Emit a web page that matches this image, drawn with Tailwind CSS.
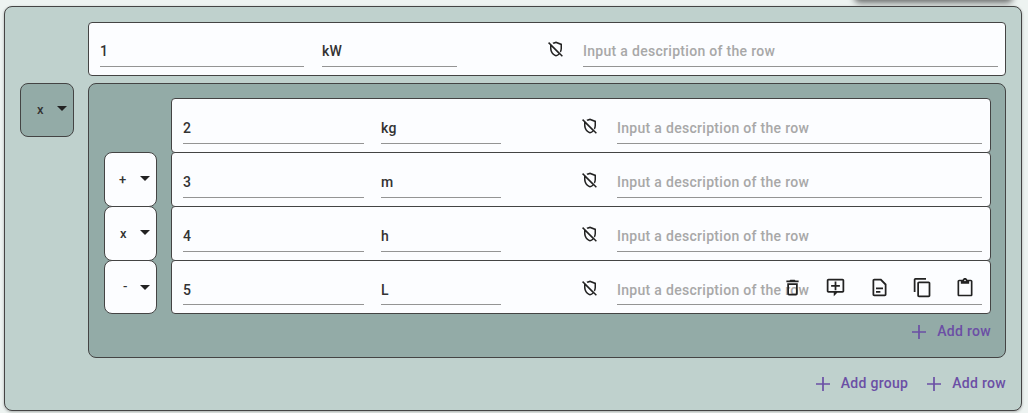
<!doctype html>
<html>
<head>
<meta charset="utf-8">
<script src="https://cdn.jsdelivr.net/npm/@tailwindcss/browser@4"></script>
</head>
<body class="relative h-[413px] w-[1028px] overflow-hidden bg-[#edf3f1] font-['Roboto',sans-serif] text-[14px] font-medium tracking-[0.3px] text-[#333]">
<div class="absolute right-[17px] top-[-8px] h-[8px] w-[155px] rounded bg-[#333] shadow-[0_1px_6px_2px_rgba(0,0,0,0.55)]"></div>

<main class="absolute left-[4px] top-[6px] flex h-[405px] w-[1018px] flex-col rounded-[8px] border border-[#444] bg-[#bfd1cd] pl-[15px] pr-[15px] pt-[15px] shadow-[0_1px_3px_rgba(0,0,0,0.3)]">
  <div class="flex">
    <div class="w-[68px] shrink-0"></div>
    <div class="flex h-[54px] w-[919px] items-start rounded-[4px] border border-[#444] bg-[#fcfdff] pl-[11px] pr-[7px]">
      <div class="w-[204px] shrink-0 border-b border-[#949494] pb-[5px] pt-[19px] leading-[19px]">1</div>
      <div class="ml-[18px] w-[135px] shrink-0 border-b border-[#949494] pb-[5px] pt-[19px] leading-[19px]">kW</div>
      <svg class="ml-[90px] mt-[17px] shrink-0" width="18" height="18" viewBox="0 0 24 24" fill="#222"><path d="M12 4.360l6 2.250v4.700c0 1.340-.36 2.660-.95 3.900l1.500 1.500c.9-1.650 1.450-3.520 1.450-5.400V5l-8-3-4.720 1.770 1.550 1.550L12 4.360zM2.810 2.810 1.390 4.220 4 6.830v4.260c0 5.050 3.410 9.760 8 10.910 1.790-.45 3.420-1.410 4.760-2.710l3.020 3.020 1.410-1.410L2.810 2.810zM12 19.930c-3.450-1.130-6-4.790-6-8.840v-2.250l9.340 9.340c-.96.820-2.100 1.430-3.340 1.750z"/></svg>
      <div class="ml-[18px] flex-1 border-b border-[#949494] pb-[5px] pt-[19px] leading-[19px] text-[#a8a8a8]">Input a description of the row</div>
    </div>
  </div>

  <div class="mt-[7px] flex">
    <div class="w-[68px] shrink-0">
      <div class="flex h-[54px] w-[54px] items-center rounded-[8px] border border-[#444] bg-[#93aba7] pb-[1px] pl-[16px] text-[13px]">
        <span class="w-[20px]">x</span>
        <svg class="mb-[2px]" width="10" height="5" viewBox="0 0 10 5"><path d="M0 0h10L5 5z" fill="#222"/></svg>
      </div>
    </div>
    <div class="flex h-[275px] w-[919px] flex-col rounded-[8px] border border-[#444] bg-[#93aba7] pl-[15px] pr-[14px] pt-[14px]">
      <div class="flex h-[54px]">
        <div class="w-[67px] shrink-0"></div>
        <div class="flex h-[55px] w-[820px] items-start rounded-[4px] border border-[#444] bg-[#fcfdff] pl-[11px] pr-[8px]">
          <div class="w-[181px] shrink-0 border-b border-[#949494] pb-[5px] pt-[20px] leading-[19px]">2</div>
          <div class="ml-[17px] w-[120px] shrink-0 border-b border-[#949494] pb-[5px] pt-[20px] leading-[19px]">kg</div>
          <svg class="ml-[80px] mt-[18px] shrink-0" width="18" height="18" viewBox="0 0 24 24" fill="#222"><path d="M12 4.360l6 2.250v4.700c0 1.340-.36 2.660-.95 3.900l1.500 1.500c.9-1.650 1.450-3.520 1.450-5.400V5l-8-3-4.720 1.770 1.550 1.550L12 4.360zM2.810 2.810 1.390 4.220 4 6.830v4.260c0 5.050 3.410 9.760 8 10.910 1.790-.45 3.420-1.410 4.760-2.710l3.020 3.020 1.410-1.410L2.810 2.810zM12 19.930c-3.450-1.130-6-4.790-6-8.840v-2.250l9.340 9.340c-.96.820-2.100 1.430-3.340 1.750z"/></svg>
          <div class="ml-[18px] flex-1 border-b border-[#949494] pb-[5px] pt-[20px] leading-[19px] text-[#a8a8a8]">Input a description of the row</div>
        </div>
      </div>

      <div class="flex h-[54px]">
        <div class="w-[67px] shrink-0">
          <div class="flex h-[55px] w-[53px] items-center rounded-[8px] border border-[#444] bg-[#fcfdff] pl-[14px] text-[13px]">
            <span class="w-[21px]">+</span>
            <svg class="mb-[2px]" width="10" height="5" viewBox="0 0 10 5"><path d="M0 0h10L5 5z" fill="#222"/></svg>
          </div>
        </div>
        <div class="flex h-[55px] w-[820px] items-start rounded-[4px] border border-[#444] bg-[#fcfdff] pl-[11px] pr-[8px]">
          <div class="w-[181px] shrink-0 border-b border-[#949494] pb-[5px] pt-[20px] leading-[19px]">3</div>
          <div class="ml-[17px] w-[120px] shrink-0 border-b border-[#949494] pb-[5px] pt-[20px] leading-[19px]">m</div>
          <svg class="ml-[80px] mt-[18px] shrink-0" width="18" height="18" viewBox="0 0 24 24" fill="#222"><path d="M12 4.360l6 2.250v4.700c0 1.340-.36 2.660-.95 3.900l1.500 1.500c.9-1.650 1.450-3.520 1.450-5.400V5l-8-3-4.720 1.770 1.550 1.550L12 4.360zM2.810 2.810 1.390 4.220 4 6.830v4.260c0 5.050 3.410 9.760 8 10.910 1.790-.45 3.420-1.410 4.760-2.710l3.020 3.020 1.410-1.410L2.810 2.810zM12 19.930c-3.450-1.130-6-4.790-6-8.840v-2.250l9.340 9.340c-.96.820-2.100 1.430-3.340 1.750z"/></svg>
          <div class="ml-[18px] flex-1 border-b border-[#949494] pb-[5px] pt-[20px] leading-[19px] text-[#a8a8a8]">Input a description of the row</div>
        </div>
      </div>

      <div class="flex h-[54px]">
        <div class="w-[67px] shrink-0">
          <div class="flex h-[55px] w-[53px] items-center rounded-[8px] border border-[#444] bg-[#fcfdff] pl-[15px] text-[13px]">
            <span class="w-[20px]">x</span>
            <svg class="mb-[2px]" width="10" height="5" viewBox="0 0 10 5"><path d="M0 0h10L5 5z" fill="#222"/></svg>
          </div>
        </div>
        <div class="flex h-[55px] w-[820px] items-start rounded-[4px] border border-[#444] bg-[#fcfdff] pl-[11px] pr-[8px]">
          <div class="w-[181px] shrink-0 border-b border-[#949494] pb-[5px] pt-[20px] leading-[19px]">4</div>
          <div class="ml-[17px] w-[120px] shrink-0 border-b border-[#949494] pb-[5px] pt-[20px] leading-[19px]">h</div>
          <svg class="ml-[80px] mt-[18px] shrink-0" width="18" height="18" viewBox="0 0 24 24" fill="#222"><path d="M12 4.360l6 2.250v4.700c0 1.340-.36 2.660-.95 3.900l1.500 1.500c.9-1.650 1.450-3.520 1.450-5.400V5l-8-3-4.720 1.770 1.550 1.550L12 4.360zM2.810 2.810 1.390 4.220 4 6.830v4.260c0 5.050 3.410 9.760 8 10.910 1.790-.45 3.420-1.410 4.760-2.710l3.020 3.020 1.410-1.410L2.810 2.810zM12 19.930c-3.450-1.130-6-4.790-6-8.840v-2.250l9.340 9.340c-.96.820-2.100 1.430-3.340 1.750z"/></svg>
          <div class="ml-[18px] flex-1 border-b border-[#949494] pb-[5px] pt-[20px] leading-[19px] text-[#a8a8a8]">Input a description of the row</div>
        </div>
      </div>

      <div class="flex h-[54px]">
        <div class="w-[67px] shrink-0">
          <div class="flex h-[54px] w-[53px] items-center rounded-[8px] border border-[#444] bg-[#fcfdff] pl-[18px] text-[13px]">
            <span class="w-[17px]">-</span>
            <svg class="mt-[1px]" width="10" height="5" viewBox="0 0 10 5"><path d="M0 0h10L5 5z" fill="#222"/></svg>
          </div>
        </div>
        <div class="relative flex h-[54px] w-[820px] items-start rounded-[4px] border border-[#444] bg-[#fcfdff] pl-[11px] pr-[8px]">
          <div class="w-[181px] shrink-0 border-b border-[#949494] pb-[4px] pt-[20px] leading-[19px]">5</div>
          <div class="ml-[17px] w-[120px] shrink-0 border-b border-[#949494] pb-[4px] pt-[20px] leading-[19px]">L</div>
          <svg class="ml-[80px] mt-[18px] shrink-0" width="18" height="18" viewBox="0 0 24 24" fill="#222"><path d="M12 4.360l6 2.250v4.700c0 1.340-.36 2.660-.95 3.900l1.500 1.500c.9-1.650 1.450-3.520 1.450-5.400V5l-8-3-4.720 1.770 1.550 1.550L12 4.360zM2.810 2.810 1.390 4.220 4 6.830v4.260c0 5.050 3.410 9.760 8 10.910 1.790-.45 3.420-1.410 4.760-2.710l3.020 3.020 1.410-1.410L2.810 2.810zM12 19.930c-3.450-1.130-6-4.790-6-8.840v-2.250l9.340 9.340c-.96.820-2.100 1.430-3.340 1.750z"/></svg>
          <div class="ml-[18px] flex-1 border-b border-[#949494] pb-[4px] pt-[20px] leading-[19px] text-[#a8a8a8]">Input a description of the row</div>
          <div class="absolute right-[15px] top-[16px] flex items-center gap-[22.2px]">
            <svg width="21" height="21" viewBox="0 0 24 24" fill="#222"><path d="M6 19c0 1.100.9 2 2 2h8c1.100 0 2-.9 2-2V7H6v12zM8 9h8v10H8V9zm7.500-5-1-1h-5l-1 1H5v2h14V4z"/></svg>
            <svg width="21" height="21" viewBox="0 0 24 24" fill="#222"><path d="M4 2c-1.100 0-2 .9-2 2v12c0 1.100.9 2 2 2h6v4l4-4h6c1.100 0 2-.9 2-2V4c0-1.100-.9-2-2-2H4zm0 2h16v12H4V4zm7 1v4H7v2h4v4h2v-4h4V9h-4V5h-2z"/></svg>
            <svg width="21" height="21" viewBox="0 0 24 24" fill="#222"><path d="M14 2H6c-1.100 0-2 .9-2 2v16c0 1.100.9 2 2 2h12c1.100 0 2-.9 2-2V8l-6-6zm4 18H6V4h7l5 5v11zM8 12h8v2H8zM8 16h5v2H8z"/></svg>
            <svg width="21" height="21" viewBox="0 0 24 24" fill="#222"><path d="M16 1H4c-1.100 0-2 .9-2 2v14h2V3h12V1zm3 4H8c-1.100 0-2 .9-2 2v14c0 1.100.9 2 2 2h11c1.100 0 2-.9 2-2V7c0-1.100-.9-2-2-2zm0 16H8V7h11v14z"/></svg>
            <svg width="20" height="20" viewBox="0 0 24 24" fill="#222"><path d="M19 2h-4.180C14.400.84 13.300 0 12 0c-1.300 0-2.400.84-2.820 2H5c-1.100 0-2 .9-2 2v16c0 1.100.9 2 2 2h14c1.100 0 2-.9 2-2V4c0-1.100-.9-2-2-2zm-7 0c.55 0 1 .45 1 1s-.45 1-1 1-1-.45-1-1 .45-1 1-1zm7 18H5V4h2v3h10V4h2v16z"/></svg>
          </div>
        </div>
      </div>

      <div class="mt-[7px] flex items-center justify-end text-[#6b4fa5]">
        <svg width="14" height="14" viewBox="0 0 14 14" stroke="currentColor" stroke-width="1.700"><path d="M7 0v14M0 7h14"/></svg>
        <span class="ml-[11px]">Add row</span>
      </div>
    </div>
  </div>

  <div class="mt-[15px] flex items-center justify-end text-[#6b4fa5]">
    <svg width="14" height="14" viewBox="0 0 14 14" stroke="currentColor" stroke-width="1.700"><path d="M7 0v14M0 7h14"/></svg>
    <span class="ml-[11px]">Add group</span>
    <svg class="ml-[19px]" width="14" height="14" viewBox="0 0 14 14" stroke="currentColor" stroke-width="1.700"><path d="M7 0v14M0 7h14"/></svg>
    <span class="ml-[11px]">Add row</span>
  </div>
</main>
</body>
</html>
